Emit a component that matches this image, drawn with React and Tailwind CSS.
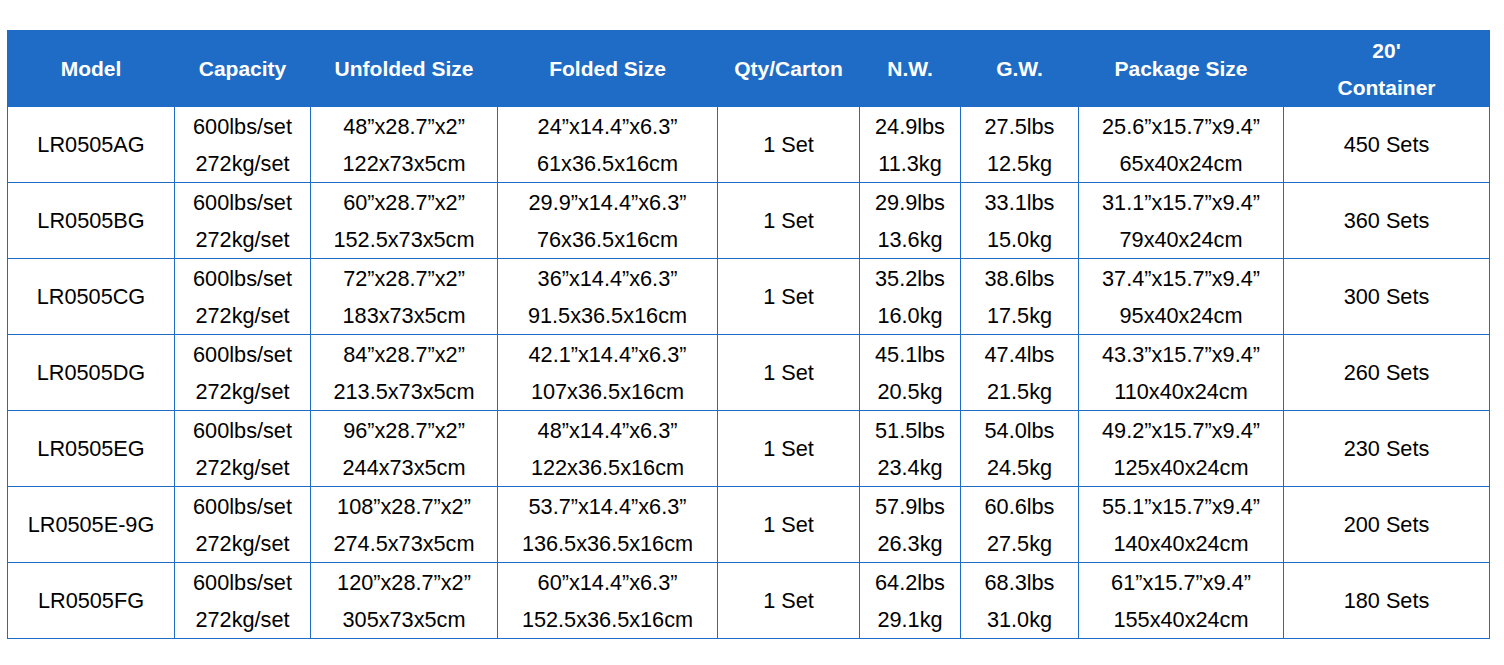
const cols = [167, 136, 187, 220, 142, 101, 118, 205, 206]

const headers = [
    ['Model'],
    ['Capacity'],
    ['Unfolded Size'],
    ['Folded Size'],
    ['Qty/Carton'],
    ['N.W.'],
    ['G.W.'],
    ['Package Size'],
    ["20'", 'Container'],
]

const rows = [
    ['LR0505AG', '48”x28.7”x2”', '122x73x5cm', '24”x14.4”x6.3”', '61x36.5x16cm', '24.9lbs', '11.3kg', '27.5lbs', '12.5kg', '25.6”x15.7”x9.4”', '65x40x24cm', '450 Sets'],
    ['LR0505BG', '60”x28.7”x2”', '152.5x73x5cm', '29.9”x14.4”x6.3”', '76x36.5x16cm', '29.9lbs', '13.6kg', '33.1lbs', '15.0kg', '31.1”x15.7”x9.4”', '79x40x24cm', '360 Sets'],
    ['LR0505CG', '72”x28.7”x2”', '183x73x5cm', '36”x14.4”x6.3”', '91.5x36.5x16cm', '35.2lbs', '16.0kg', '38.6lbs', '17.5kg', '37.4”x15.7”x9.4”', '95x40x24cm', '300 Sets'],
    ['LR0505DG', '84”x28.7”x2”', '213.5x73x5cm', '42.1”x14.4”x6.3”', '107x36.5x16cm', '45.1lbs', '20.5kg', '47.4lbs', '21.5kg', '43.3”x15.7”x9.4”', '110x40x24cm', '260 Sets'],
    ['LR0505EG', '96”x28.7”x2”', '244x73x5cm', '48”x14.4”x6.3”', '122x36.5x16cm', '51.5lbs', '23.4kg', '54.0lbs', '24.5kg', '49.2”x15.7”x9.4”', '125x40x24cm', '230 Sets'],
    ['LR0505E-9G', '108”x28.7”x2”', '274.5x73x5cm', '53.7”x14.4”x6.3”', '136.5x36.5x16cm', '57.9lbs', '26.3kg', '60.6lbs', '27.5kg', '55.1”x15.7”x9.4”', '140x40x24cm', '200 Sets'],
    ['LR0505FG', '120”x28.7”x2”', '305x73x5cm', '60”x14.4”x6.3”', '152.5x36.5x16cm', '64.2lbs', '29.1kg', '68.3lbs', '31.0kg', '61”x15.7”x9.4”', '155x40x24cm', '180 Sets'],
]

function Cell({ lines }) {
    return (
        <td className="border border-[#1f6cc6] p-0 text-center align-middle">
            {lines.map((l, i) => (
                <div key={i} className="leading-[37px]">
                    {l}
                </div>
            ))}
        </td>
    )
}

export default function App() {
    return (
        <div className="bg-white w-[1504px] h-[665px] pt-[30px] pl-[7px] font-['Liberation_Sans',Arial,sans-serif] text-[21.7px] text-black">
            <table className="border-collapse table-fixed w-[1482px]">
                <colgroup>
                    {cols.map((w, i) => (
                        <col key={i} style={{ width: w }} />
                    ))}
                </colgroup>
                <thead>
                    <tr className="h-[76px] bg-[#1f6cc6] text-white font-bold text-[21px]">
                        {headers.map((h, i) => (
                            <th key={i} className="border border-[#1f6cc6] p-0 text-center align-middle">
                                {h.map((l, j) => (
                                    <div key={j} className="leading-[37px]">
                                        {l}
                                    </div>
                                ))}
                            </th>
                        ))}
                    </tr>
                </thead>
                <tbody>
                    {rows.map((r) => (
                        <tr key={r[0]} className="h-[76px]">
                            <Cell lines={[r[0]]} />
                            <Cell lines={['600lbs/set', '272kg/set']} />
                            <Cell lines={[r[1], r[2]]} />
                            <Cell lines={[r[3], r[4]]} />
                            <Cell lines={['1 Set']} />
                            <Cell lines={[r[5], r[6]]} />
                            <Cell lines={[r[7], r[8]]} />
                            <Cell lines={[r[9], r[10]]} />
                            <Cell lines={[r[11]]} />
                        </tr>
                    ))}
                </tbody>
            </table>
        </div>
    )
}
